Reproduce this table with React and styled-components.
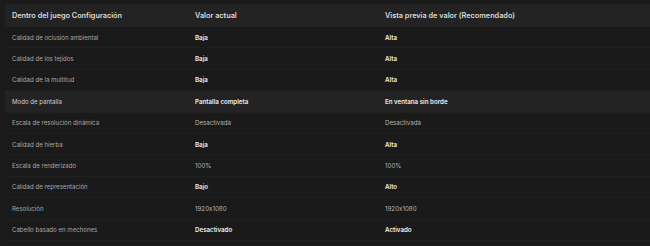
import React from 'react';
import styled, { createGlobalStyle } from 'styled-components';

const GlobalStyle = createGlobalStyle`
  html, body {
    margin: 0;
    padding: 0;
    background: #1b1b1b;
  }
  body {
    font-family: Inter, "Noto Sans", "Liberation Sans", sans-serif;
    font-feature-settings: "calt" 0;
    -webkit-font-smoothing: antialiased;
  }
`;

const Page = styled.div`
  width: 650px;
  height: 246px;
  overflow: hidden;
  padding: 4px 0 0 5px;
  box-sizing: border-box;
  background: #1b1b1b;
`;

const Table = styled.div`
  display: flex;
  flex-direction: column;
  width: 660px;
`;

const Row = styled.div`
  display: grid;
  grid-template-columns: 183px 190px 1fr;
  align-items: center;
  height: ${p => (p.$head ? '23px' : '21.4px')};
  background: ${p => (p.$highlight || p.$head ? '#232323' : '#1a1a1a')};
  border-bottom: ${p => (p.$head ? 'none' : '1px solid #202020')};
  box-sizing: border-box;
`;

const HeadCell = styled.div`
  padding-left: 7px;
  font-size: 7.3px;
  font-weight: 600;
  color: #dcdcdc;
  white-space: nowrap;
`;

const Label = styled.div`
  padding-left: 7px;
  font-size: 6.1px;
  color: ${p => (p.$strong ? '#d0d0d0' : '#a8a8a8')};
  white-space: nowrap;
`;

const Value = styled.div`
  padding-left: 7px;
  font-size: 6.2px;
  font-weight: ${p => (p.$bold ? 600 : 400)};
  color: ${p => (p.$bold ? '#f0f0f0' : '#b4b4b4')};
  white-space: nowrap;
`;

const rows = [
  ['Calidad de oclusión ambiental', 'Baja', 'Alta', true],
  ['Calidad de los tejidos', 'Baja', 'Alta', true],
  ['Calidad de la multitud', 'Baja', 'Alta', true],
  ['Modo de pantalla', 'Pantalla completa', 'En ventana sin borde', true, true],
  ['Escala de resolución dinámica', 'Desactivada', 'Desactivada', false],
  ['Calidad de hierba', 'Baja', 'Alta', true],
  ['Escala de renderizado', '100%', '100%', false],
  ['Calidad de representación', 'Bajo', 'Alto', true],
  ['Resolución', '1920x1080', '1920x1080', false],
  ['Cabello basado en mechones', 'Desactivado', 'Activado', true],
];

export default function App() {
  return (
    <>
      <GlobalStyle />
      <Page>
        <Table>
          <Row $head>
            <HeadCell>Dentro del juego Configuración</HeadCell>
            <HeadCell>Valor actual</HeadCell>
            <HeadCell>Vista previa de valor (Recomendado)</HeadCell>
          </Row>
          {rows.map(([label, current, preview, bold, highlight]) => (
            <Row key={label} $highlight={highlight}>
              <Label $strong={highlight}>{label}</Label>
              <Value $bold={bold}>{current}</Value>
              <Value $bold={bold}>{preview}</Value>
            </Row>
          ))}
        </Table>
      </Page>
    </>
  );
}
